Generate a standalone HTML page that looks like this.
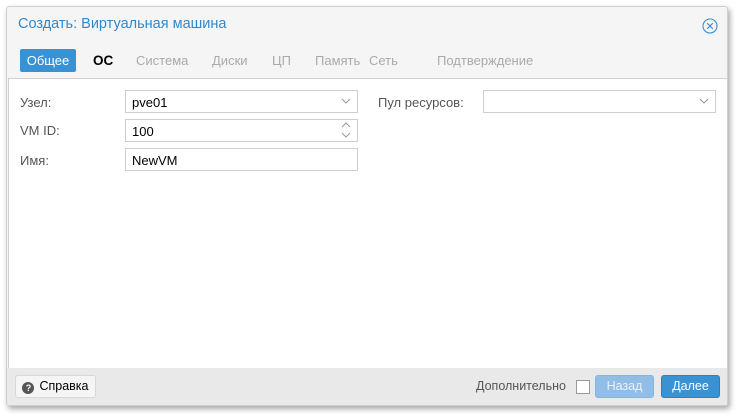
<!DOCTYPE html>
<html><head><meta charset="utf-8"><style>
body{margin:0;width:742px;height:420px;background:#fff;font-family:"Liberation Sans","DejaVu Sans",sans-serif;font-size:13px;position:relative;overflow:hidden}
.win{position:absolute;left:6px;top:6px;width:720px;height:398px;background:#f5f5f5;border:1px solid #cfcfcf;box-shadow:2px 3px 6px rgba(0,0,0,.35);border-radius:3px}
.abs{position:absolute}
.title{left:11px;top:9px;color:#3288cc;font-size:14.5px}
.tab{top:46px;font-size:13px;color:#aaa}
.body{left:1px;top:71px;width:718px;height:289px;background:#fff;border-top:1px solid #d0d0d0;border-bottom:1px solid #d0d0d0;border-left:1px solid #d0d0d0}
.lbl{color:#555}
.inp{background:#fff;border:1px solid #cfcfcf;box-sizing:border-box;height:23px;padding:4px 6px;color:#000}
.foot{left:0;top:361px;width:720px;height:37px;background:#e9e9e9}
.btn{height:23px;box-sizing:border-box;border-radius:3px;text-align:center;line-height:21px;font-size:12.5px}
</style></head><body>
<div class="win">
<div class="abs title">Создать: Виртуальная машина</div>
<svg class="abs" style="left:695px;top:11px" width="16" height="16" viewBox="0 0 16 16"><circle cx="8" cy="8" r="7" fill="none" stroke="#3a8fd6" stroke-width="1.1"/><path d="M5.2 5.2L10.8 10.8M10.8 5.2L5.2 10.8" stroke="#3a8fd6" stroke-width="1.1"/></svg>
<div class="abs" style="left:13px;top:42px;width:56px;height:23px;background:#3892d4;border-radius:2px;color:#fff;text-align:center;line-height:23px">Общее</div>
<div class="abs tab" style="left:86px;color:#000;font-size:13.5px;font-weight:600">ОС</div>
<div class="abs tab" style="left:129px">Система</div>
<div class="abs tab" style="left:205px">Диски</div>
<div class="abs tab" style="left:265px">ЦП</div>
<div class="abs tab" style="left:308px">Память</div>
<div class="abs tab" style="left:362px">Сеть</div>
<div class="abs tab" style="left:430px">Подтверждение</div>
<div class="abs body"></div>
<div class="abs lbl" style="left:13px;top:88px">Узел:</div>
<div class="abs lbl" style="left:13px;top:116px">VM ID:</div>
<div class="abs lbl" style="left:13px;top:146px">Имя:</div>
<div class="abs lbl" style="left:371px;top:88px">Пул ресурсов:</div>
<div class="abs inp" style="left:118px;top:83px;width:233px">pve01</div>
<div class="abs inp" style="left:118px;top:112px;width:233px">100</div>
<div class="abs inp" style="left:118px;top:141px;width:233px">NewVM</div>
<div class="abs inp" style="left:476px;top:83px;width:233px"></div>
<svg class="abs" style="left:334px;top:91px" width="10" height="6"><path d="M1 1L5 5L9 1" fill="none" stroke="#999"/></svg>
<svg class="abs" style="left:692px;top:91px" width="10" height="6"><path d="M1 1L5 5L9 1" fill="none" stroke="#999"/></svg>
<svg class="abs" style="left:334px;top:115px" width="10" height="16"><path d="M1 5L5 1L9 5M1 11L5 15L9 11" fill="none" stroke="#999"/></svg>
<div class="abs foot"></div>
<div class="abs btn" style="left:8px;top:368px;width:81px;background:#f5f5f5;border:1px solid #d8d8d8;color:#000">
<span style="display:inline-block;width:12px;height:12px;border-radius:50%;background:#555;color:#fff;font-size:9px;line-height:12px;font-weight:bold;vertical-align:-1px;margin-right:5px">?</span>Справка</div>
<div class="abs" style="left:469px;top:372px;color:#555;font-size:12.5px">Дополнительно</div>
<div class="abs" style="left:569px;top:373px;width:12px;height:12px;border:1px solid #999;background:#fff"></div>
<div class="abs btn" style="left:588px;top:368px;width:59px;background:#90bee6;border:1px solid #86b4dc;color:#e8f1fa">Назад</div>
<div class="abs btn" style="left:654px;top:368px;width:59px;background:#3892d4;border:1px solid #2a80c2;color:#fff">Далее</div>
</div>
</body></html>
